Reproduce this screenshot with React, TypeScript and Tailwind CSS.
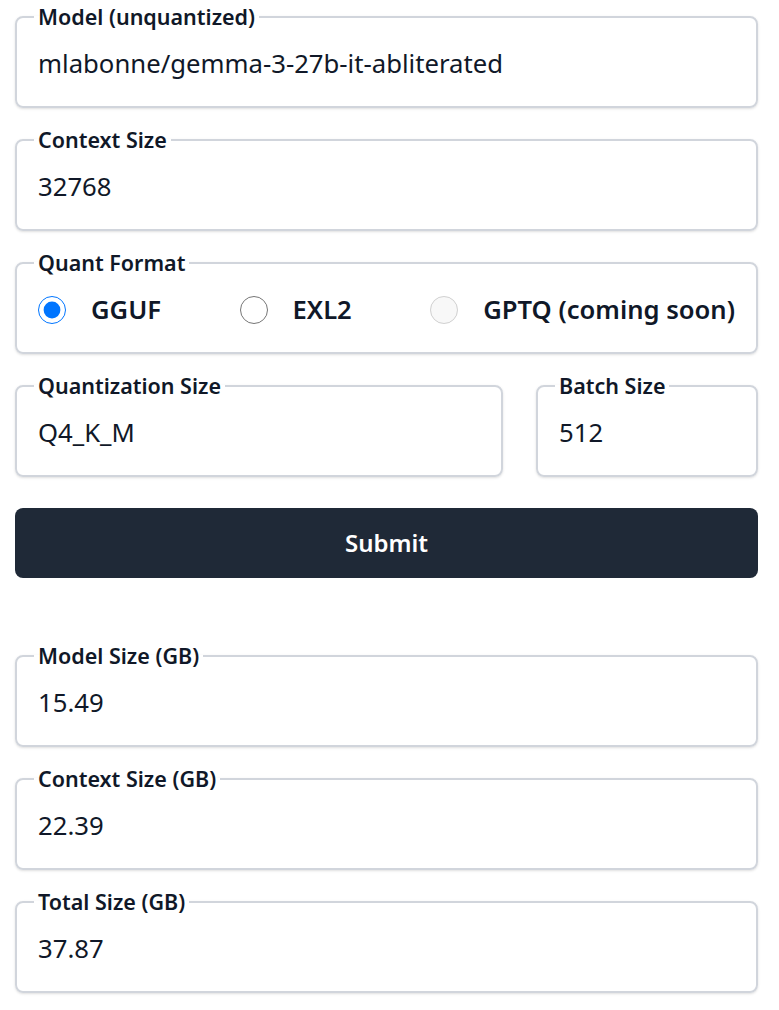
import { useState } from 'react';

const font = { fontFamily: '"Noto Sans", "Open Sans", sans-serif' };

function Field({ label, value, className = '' }: { label: string; value: string; className?: string }) {
    return (
        <fieldset className={`border-2 border-gray-300 rounded-lg shadow-sm px-[17px] pb-[24px] min-w-0 ${className}`}>
            <legend className="px-1 text-[21.5px] leading-7 font-semibold text-gray-900">{label}</legend>
            <input
                type="text"
                defaultValue={value}
                className="mt-[15px] h-[36px] w-full px-1 text-[25.7px] text-gray-900 outline-none bg-transparent"
                style={font}
            />
        </fieldset>
    );
}

export default function App() {
    const [format, setFormat] = useState('gguf');

    return (
        <div className="min-h-screen bg-white pl-[15px] pr-[21px] pt-[3px]" style={font}>
            <div className="flex flex-col gap-[18px]">
                <Field label="Model (unquantized)" value="mlabonne/gemma-3-27b-it-abliterated" />
                <Field label="Context Size" value="32768" />

                <fieldset className="border-2 border-gray-300 rounded-lg shadow-sm px-[17px] pb-[24px]">
                    <legend className="px-1 text-[21.5px] leading-7 font-semibold text-gray-900">Quant Format</legend>
                    <div className="mt-[15px] h-[36px] flex items-center justify-between px-1">
                        <label className="flex items-center gap-[25px] text-[25.6px] font-semibold text-gray-900">
                            <input
                                type="radio"
                                name="fmt"
                                checked={format === 'gguf'}
                                onChange={() => setFormat('gguf')}
                                className="w-7 h-7 m-0"
                            />
                            GGUF
                        </label>
                        <label className="flex items-center gap-[25px] text-[25.6px] font-semibold text-gray-900">
                            <input
                                type="radio"
                                name="fmt"
                                checked={format === 'exl2'}
                                onChange={() => setFormat('exl2')}
                                className="w-7 h-7 m-0"
                            />
                            EXL2
                        </label>
                        <label className="flex items-center gap-[25px] text-[25.6px] font-semibold text-gray-900">
                            <input type="radio" name="fmt" disabled className="w-7 h-7 m-0" />
                            GPTQ (coming soon)
                        </label>
                    </div>
                </fieldset>

                <div className="grid grid-cols-[488px_1fr] gap-[33px]">
                    <Field label="Quantization Size" value="Q4_K_M" />
                    <Field label="Batch Size" value="512" />
                </div>

                <button className="mt-[13px] h-[70px] w-full rounded-lg bg-[#1f2937] text-white text-[24px] font-semibold">
                    Submit
                </button>

                <div className="mt-[46px] flex flex-col gap-[18px]">
                    <Field label="Model Size (GB)" value="15.49" />
                    <Field label="Context Size (GB)" value="22.39" />
                    <Field label="Total Size (GB)" value="37.87" />
                </div>
            </div>
        </div>
    );
}
